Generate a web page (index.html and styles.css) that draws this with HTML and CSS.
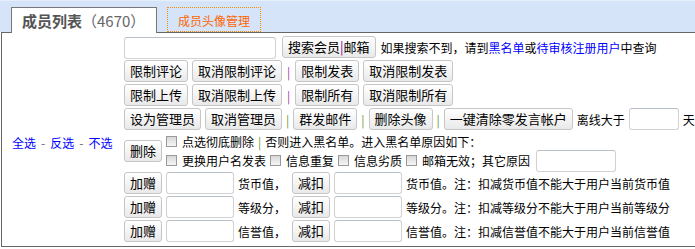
FILE: index.html
```html
<!DOCTYPE html>
<html lang="zh-CN">
<head>
    <meta charset="UTF-8">
    <title>成员列表</title>
    <link rel="stylesheet" href="styles.css">
</head>
<body>
    <div class="tabs">
        <div class="tab tab-active"><b>成员列表</b><span class="count">（4670）</span></div>
        <div class="tab tab-other">成员头像管理</div>
    </div>

    <div class="box">
        <div class="side">
            <a href="#">全选</a><span class="dash">-</span><a href="#">反选</a><span class="dash">-</span><a href="#">不选</a>
        </div>

        <div class="main">
            <div class="row">
                <input type="text" class="input-search">
                <button class="btn btn-search">搜索会员<span class="sep-in">|</span>邮箱</button>
                <span class="note">如果搜索不到，请到<a href="#">黑名单</a>或<a href="#">待审核注册用户</a>中查询</span>
            </div>

            <div class="row">
                <button class="btn">限制评论</button>
                <button class="btn">取消限制评论</button>
                <span class="sep">|</span>
                <button class="btn">限制发表</button>
                <button class="btn">取消限制发表</button>
            </div>

            <div class="row">
                <button class="btn">限制上传</button>
                <button class="btn">取消限制上传</button>
                <span class="sep">|</span>
                <button class="btn">限制所有</button>
                <button class="btn">取消限制所有</button>
            </div>

            <div class="row row-tight">
                <button class="btn">设为管理员</button>
                <button class="btn">取消管理员</button>
                <span class="sep sep-green">|</span>
                <button class="btn">群发邮件</button>
                <span class="sep sep-green">|</span>
                <button class="btn">删除头像</button>
                <span class="sep sep-green">|</span>
                <button class="btn">一键清除零发言帐户</button>
                <span>离线大于</span>
                <input type="text" class="input-days">
                <span>天</span>
            </div>

            <div class="row row-delete">
                <button class="btn">删除</button>
                <div class="delete-opts">
                    <div class="line line-first">
                        <label><input type="checkbox" class="chk">点选彻底删除</label>
                        <span class="sep sep-green">|</span>
                        <span>否则进入黑名单。进入黑名单原因如下：</span>
                    </div>
                    <div class="line">
                        <label><input type="checkbox" class="chk">更换用户名发表</label>
                        <label><input type="checkbox" class="chk">信息重复</label>
                        <label><input type="checkbox" class="chk">信息劣质</label>
                        <label><input type="checkbox" class="chk">邮箱无效；其它原因</label>
                        <input type="text" class="input-reason">
                    </div>
                </div>
            </div>

            <div class="row">
                <button class="btn">加赠</button>
                <input type="text" class="input-num">
                <span class="unit">货币值，</span>
                <button class="btn">减扣</button>
                <input type="text" class="input-num">
                <span>货币值。注：扣减货币值不能大于用户当前货币值</span>
            </div>

            <div class="row">
                <button class="btn">加赠</button>
                <input type="text" class="input-num">
                <span class="unit">等级分，</span>
                <button class="btn">减扣</button>
                <input type="text" class="input-num">
                <span>等级分。注：扣减等级分不能大于用户当前等级分</span>
            </div>

            <div class="row">
                <button class="btn">加赠</button>
                <input type="text" class="input-num">
                <span class="unit">信誉值，</span>
                <button class="btn">减扣</button>
                <input type="text" class="input-num">
                <span>信誉值。注：扣减信誉值不能大于用户当前信誉值</span>
            </div>
        </div>
    </div>
</body>
</html>
```

FILE: styles.css
```css
body {
    margin: 0;
    width: 695px;
    overflow: hidden;
    font-family: "Noto Sans CJK SC", "DejaVu Sans", sans-serif;
    font-size: 12px;
    color: #000;
    background-color: #fff;
}
a {
    color: #00f;
    text-decoration: none;
}
.tabs {
    display: flex;
    align-items: flex-end;
    gap: 10px;
    height: 32px;
    padding-left: 11px;
    box-sizing: border-box;
    background-color: #d5e4f8;
    border-top: 1px solid #e6eefa;
}
.tab {
    box-sizing: border-box;
    height: 25px;
    padding-top: 3px;
    line-height: 20px;
}
.tab-active {
    width: 146px;
    height: 26px;
    margin-bottom: -1px;
    padding-left: 10px;
    background-color: #fff;
    border: 1px solid #777;
    border-bottom: none;
    font-size: 15px;
    color: #555;
}
.tab-active b {
    font-weight: bold;
}
.count {
    color: #666;
}
.tab-other {
    width: 94px;
    text-align: center;
    border: 1px dotted #f80;
    color: #f60;
    font-size: 12px;
}
.box {
    display: flex;
    width: 720px;
    margin-left: 1px;
    border: 1px solid #666;
    border-right: none;
}
.side {
    display: flex;
    align-items: center;
    flex-shrink: 0;
    width: 112px;
    padding: 6px 0 0 10px;
    color: #666;
    white-space: nowrap;
}
.dash {
    margin: 0 5px;
}
.main {
    padding: 2px 0 3px 0;
}
.row {
    display: flex;
    align-items: center;
    gap: 4px;
    height: 24px;
    white-space: nowrap;
}
.row-tight .sep {
    margin: 0;
}
.btn {
    height: 22px;
    padding: 0 5px;
    font-family: inherit;
    font-size: 13px;
    line-height: 20px;
    color: #000;
    background: linear-gradient(#fff, #e9e9e9);
    border: 1px solid #c6c6c6;
    border-radius: 3px;
}
.btn-search {
    margin-left: 2px;
}
.note {
    margin-left: 1px;
}
.sep-in {
    color: #909;
}
.sep {
    margin: 0 1px;
    color: #a3a;
}
.sep-green {
    color: #693;
}
input[type="text"] {
    box-sizing: border-box;
    height: 22px;
    padding: 0 3px;
    border: 1px solid #d2d2d2;
    border-top-color: #b8c0cc;
    border-radius: 3px;
    background-color: #fff;
}
.input-search {
    width: 152px;
    margin-top: 1px;
}
.input-days {
    width: 50px;
}
.input-reason {
    width: 80px;
    margin-left: 2px;
}
.input-num {
    width: 68px;
}
.unit {
    margin-right: 2px;
}
.row-delete {
    height: 40px;
}
.delete-opts {
    display: flex;
    flex-direction: column;
}
.line {
    display: flex;
    align-items: center;
    gap: 4px;
    height: 22px;
}
.line-first {
    height: 16px;
    margin-top: 3px;
    gap: 2px;
}
.line-first .sep {
    margin: 0 2px;
}
label {
    display: flex;
    align-items: center;
}
.chk {
    appearance: none;
    width: 11px;
    height: 11px;
    margin: 0 5px 0 0;
    border: 1px solid #999;
    background: linear-gradient(#d8d8d8, #f6f6f6);
}
```
